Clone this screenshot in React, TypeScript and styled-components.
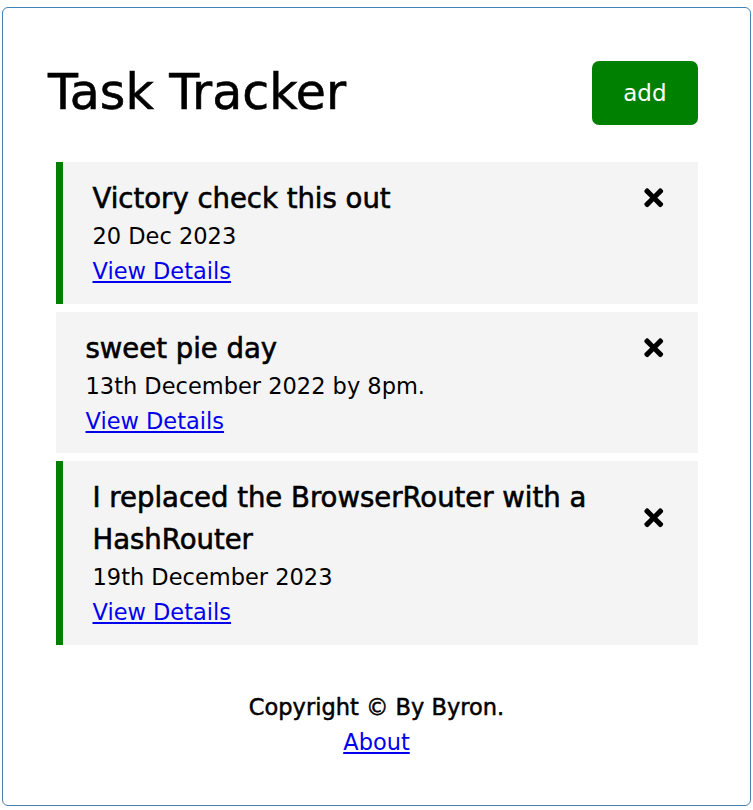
import React from 'react';
import styled, { createGlobalStyle } from 'styled-components';
import { FaTimes } from 'react-icons/fa';

const GlobalStyle = createGlobalStyle`
  * { box-sizing: border-box; margin: 0; padding: 0; }
  body { font-family: 'DejaVu Sans', 'Noto Sans', sans-serif; background: #fff; color: #000; }
`;

const Container = styled.div`
  margin: 7px 2px 5px;
  border: 1px solid steelblue;
  border-radius: 6px;
  padding: 45px;
  overflow: auto;
`;

const Header = styled.header`
  display: flex;
  justify-content: space-between;
  align-items: center;
  margin-bottom: 30px;
`;

const Title = styled.h1`
  font-size: 49px;
  font-weight: 400;
  line-height: 72px;
  -webkit-text-stroke: 0.6px #000;
`;

const AddButton = styled.button`
  background: green;
  color: #fff;
  border: none;
  border-radius: 7px;
  padding: 15px 31px;
  margin: 7.5px;
  font-family: inherit;
  font-size: 23px;
  line-height: 34px;
  cursor: pointer;
`;

const TaskCard = styled.div<{ $reminder: boolean }>`
  background: #f4f4f4;
  margin: 8px 7.5px;
  padding: 15px 30px;
  border-left: ${(p) => (p.$reminder ? '7px solid green' : 'none')};
  cursor: pointer;
`;

const TaskTitle = styled.h3`
  display: flex;
  align-items: center;
  justify-content: space-between;
  font-size: 27.5px;
  font-weight: 400;
  line-height: 42px;
  -webkit-text-stroke: 0.6px #000;
`;

const CloseIcon = styled(FaTimes)`
  flex-shrink: 0;
  margin-left: 12px;
  -webkit-text-stroke: 0;
`;

const TaskDate = styled.p`
  font-size: 22.5px;
  line-height: 35px;
`;

const DetailsLink = styled.a`
  display: block;
  width: fit-content;
  font-size: 22.5px;
  line-height: 34.5px;
  color: #0000ee;
  text-decoration: underline;
`;

const Footer = styled.footer`
  margin-top: 45px;
  text-align: center;
`;

const Copyright = styled.p`
  font-size: 22.5px;
  font-weight: 400;
  line-height: 35px;
  -webkit-text-stroke: 0.5px #000;
`;

const FooterLink = styled.a`
  font-size: 22.5px;
  line-height: 35px;
  color: #0000ee;
  text-decoration: underline;
`;

const tasks = [
  { id: 1, text: 'Victory check this out', day: '20 Dec 2023', reminder: true },
  { id: 2, text: 'sweet pie day', day: '13th December 2022 by 8pm.', reminder: false },
  { id: 3, text: 'I replaced the BrowserRouter with a HashRouter', day: '19th December 2023', reminder: true },
];

export default function App() {
  return (
    <>
      <GlobalStyle />
      <Container>
        <Header>
          <Title>Task Tracker</Title>
          <AddButton>add</AddButton>
        </Header>
        <div>
          {tasks.map((t) => (
            <TaskCard key={t.id} $reminder={t.reminder}>
              <TaskTitle>
                <span>{t.text}</span>
                <CloseIcon />
              </TaskTitle>
              <TaskDate>{t.day}</TaskDate>
              <DetailsLink href="#">View Details</DetailsLink>
            </TaskCard>
          ))}
        </div>
        <Footer>
          <Copyright>Copyright © By Byron.</Copyright>
          <FooterLink href="#">About</FooterLink>
        </Footer>
      </Container>
    </>
  );
}
